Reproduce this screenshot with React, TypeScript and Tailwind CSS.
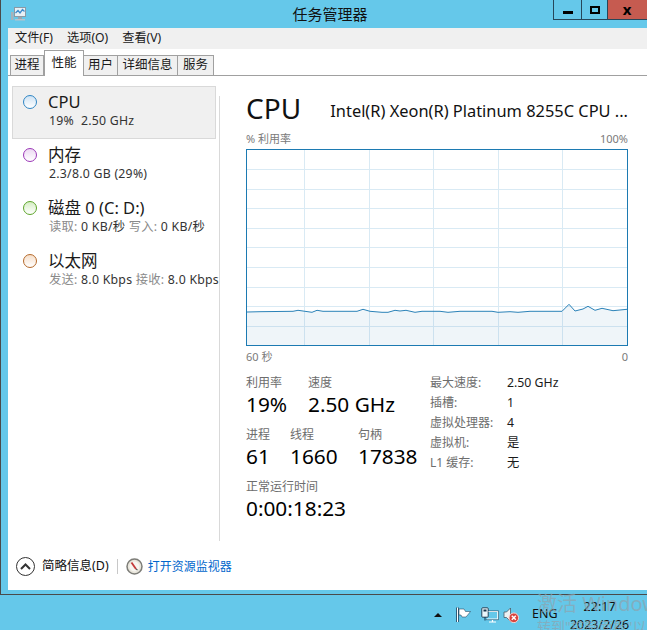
const FONT = '[font-family:"Noto_Sans","Noto_Sans_CJK_SC",sans-serif]'

const linePoints =
  '1,163 14,162.7 47,162.3 52,161.3 66,163.3 71,161.3 77,162.3 111,162.3 117,160.3 124,162.3 136,163.3 142,163.3 149,161.3 154,162 160,161.3 169,163.3 176,162.3 194,162.3 202,163.3 214,162.3 246,162.3 252,163.3 264,162.7 272,163.3 284,162.3 316,162.3 323,155.3 329,162 337,160 342,157.3 349,161.3 356,159.3 367,161.7 381,160.3'

function Ring({ border, from }: { border: string; from: string }) {
  return <span className={`mt-[3px] block h-[14px] w-[14px] shrink-0 rounded-full border-[1.5px] bg-gradient-to-b to-white ${border} ${from}`} />
}

function SideItem({ ring, title, sub, selected }: { ring: React.ReactNode; title: string; sub: React.ReactNode; selected?: boolean }) {
  return (
    <div className={`flex h-[53px] w-[204px] items-start gap-[11px] border pl-[10px] pt-[5px] ${selected ? 'border-[#d9d9d9] bg-[#f0f0f0]' : 'border-transparent'}`}>
      {ring}
      <div className="whitespace-nowrap">
        <div className="h-[20px] text-[16.5px] leading-[20px] text-[#1a1a1a]">{title}</div>
        <div className="ml-px text-[12.3px] leading-[17px] tracking-[0.25px] text-[#333]">{sub}</div>
      </div>
    </div>
  )
}

function Stat({ label, value, className }: { label: string; value: string; className: string }) {
  return (
    <div className={className}>
      <div className="h-[16px] text-[12px] leading-[16px] text-[#6d6d6d]">{label}</div>
      <div className="text-[20.8px] leading-[26px] text-black">{value}</div>
    </div>
  )
}

function Spec({ label, value }: { label: string; value: string }) {
  return (
    <div className="flex h-[20px] items-center text-[12px]">
      <span className="w-[77px] text-[#6d6d6d]">{label}</span>
      <span className="text-[12.3px] text-[#1a1a1a]">{value}</span>
    </div>
  )
}

function Graph() {
  return (
    <svg className="block" width="382" height="197" viewBox="0 0 382 197">
      <rect x="0.5" y="0.5" width="381" height="196" fill="#fff" />
      {[20, 40, 59, 79, 98, 118, 138, 157, 177].map((y) => (
        <line key={y} x1="1" x2="381" y1={y + 0.5} y2={y + 0.5} stroke="#d9eaf4" />
      ))}
      {[58.5, 123.5, 187.5, 252.5, 316.5].map((x) => (
        <line key={x} x1={x} x2={x} y1="1" y2="196" stroke="#d9eaf4" />
      ))}
      <polygon points={`1,196 ${linePoints} 381,196`} fill="#4f8fc0" fillOpacity="0.09" />
      <polyline points={linePoints} fill="none" stroke="#2b82b8" strokeWidth="1" />
      <rect x="0.5" y="0.5" width="381" height="196" fill="none" stroke="#1c7ab2" />
    </svg>
  )
}

function AppIcon() {
  return (
    <svg className="block" width="17" height="16" viewBox="0 0 17 16">
      <rect x="4.5" y="1.5" width="11" height="9" fill="#e8f0f5" stroke="#8a9aa6" />
      <path d="M5.5 7 L8 4.5 L10 7 L12.5 3.5 L14.5 5.5" fill="none" stroke="#3f8ccc" strokeWidth="1.3" />
      <rect x="1" y="6" width="2.5" height="8" fill="#a8b2ba" />
      <rect x="8" y="11" width="4" height="2" fill="#9aa6ae" />
      <rect x="5" y="13" width="10" height="1.5" fill="#b8c2ca" />
    </svg>
  )
}

function MonitorIcon() {
  return (
    <svg className="block" width="17" height="17" viewBox="0 0 17 17">
      <circle cx="8.5" cy="8.5" r="7.5" fill="#e9e6dc" stroke="#7d7d78" strokeWidth="1.5" />
      <circle cx="8.5" cy="8.5" r="5" fill="#f7f6f1" />
      <path d="M5.5 4.5 L10 11" stroke="#c43b3b" strokeWidth="1.8" />
      <path d="M10 11 L11.5 12" stroke="#555" strokeWidth="1.2" />
    </svg>
  )
}

function FlagIcon() {
  return (
    <svg className="block" width="15" height="16" viewBox="0 0 15 16">
      <path d="M1.5 0.5 V15" stroke="#17324a" strokeWidth="2.4" />
      <path d="M1.5 0.5 V15" stroke="#fff" strokeWidth="1" />
      <path d="M3 2 H8 L9.5 4.5 H14.5 L12.5 7 L10 10 H6 L5 8 H3 Z" fill="#fff" stroke="#17324a" strokeWidth="0.5" />
    </svg>
  )
}

function NetworkIcon() {
  return (
    <svg className="block" width="18" height="16" viewBox="0 0 18 16">
      <rect x="0.8" y="0.8" width="6.4" height="9.4" rx="0.8" fill="#eaf6fb" stroke="#17324a" strokeWidth="0.9" />
      <rect x="2.5" y="2.5" width="3" height="2" fill="#17324a" />
      <path d="M4 10 V13.5" stroke="#17324a" />
      <path d="M7.5 4.5 H16.8 V12 H6 " fill="none" stroke="#fff" strokeWidth="1.2" />
      <path d="M7 3.8 H17.5 V12.7 H5" fill="none" stroke="#17324a" strokeWidth="0.5" />
      <path d="M11.5 13 V14.5 M8 15 H15" stroke="#fff" strokeWidth="1.2" />
    </svg>
  )
}

function SoundIcon() {
  return (
    <svg className="block" width="16" height="16" viewBox="0 0 16 16">
      <path d="M1 5 H3.5 L7.5 1 V14.5 L3.5 10.5 H1 Z" fill="#eef1f3" stroke="#4a5a66" strokeWidth="0.8" />
      <circle cx="10.8" cy="10.8" r="4.8" fill="#d9423c" stroke="#f3d5d2" />
      <path d="M8.8 8.8 L12.8 12.8 M12.8 8.8 L8.8 12.8" stroke="#fff" strokeWidth="1.5" />
    </svg>
  )
}

export default function App() {
  return (
    <div className={`relative flex h-[630px] w-[647px] flex-col overflow-hidden bg-[#65c8ea] ${FONT}`}>
      {/* task manager window */}
      <div className="flex h-[595px] shrink-0 flex-col border-b border-l border-[#4a4a4a] pb-[4px] pl-[7px]">
        <div className="-ml-[7px] flex h-[28px] shrink-0">
          <div className="w-[106px] pl-[9px] pt-[6px]">
            <AppIcon />
          </div>
          <div className="flex-1 pt-[4px] text-center text-[15px] leading-[20px] text-[#111]">任务管理器</div>
          <div className="flex h-[20px] w-[94px] border-b border-l border-[#26475a]">
            <div className="flex w-[28px] items-center justify-center border-r border-[#26475a]">
              <span className="mt-[5px] h-[3px] w-[10px] bg-black" />
            </div>
            <div className="flex w-[26px] items-center justify-center border-r border-[#26475a]">
              <span className="h-[8px] w-[10px] border-2 border-black" />
            </div>
            <div className="flex flex-1 items-center justify-center bg-[#c65b50] pr-[1px] text-[15px] font-bold leading-none text-black">x</div>
          </div>
        </div>

        <div className="flex h-[21px] shrink-0 items-center gap-[14px] bg-[#f0f0f0] pl-[7px] text-[12.2px] text-[#1a1a1a]">
          <span>文件(F)</span>
          <span>选项(O)</span>
          <span>查看(V)</span>
        </div>

        <div className="flex h-[27px] shrink-0 items-end border-b border-[#a0a0a0] bg-white pl-[2px] text-[12.5px] text-[#1a1a1a]">
          <div className="flex h-[20px] w-[34px] items-center justify-center border border-b-0 border-[#a0a0a0] bg-[#f0f0f0]">进程</div>
          <div className="z-10 -mb-px flex h-[26px] w-[40px] items-center justify-center border border-b-0 border-[#a0a0a0] bg-white">性能</div>
          <div className="flex h-[20px] w-[34px] items-center justify-center border-r border-t border-[#a0a0a0] bg-[#f0f0f0]">用户</div>
          <div className="flex h-[20px] w-[60px] items-center justify-center border-r border-t border-[#a0a0a0] bg-[#f0f0f0]">详细信息</div>
          <div className="flex h-[20px] w-[36px] items-center justify-center border-r border-t border-[#a0a0a0] bg-[#f0f0f0]">服务</div>
        </div>

        <div className="flex min-h-0 flex-1 flex-col bg-white">
          <div className="flex h-[474px] shrink-0">
            {/* sidebar */}
            <div className="w-[211px] shrink-0 pl-[4px] pt-[10px]">
              <SideItem selected ring={<Ring border="border-[#2f86c4]" from="from-[#cfe3f4]" />} title="CPU" sub={'19%\u00a0 2.50 GHz'} />
              <SideItem ring={<Ring border="border-[#9b37b8]" from="from-[#ecd9f2]" />} title="内存" sub="2.3/8.0 GB (29%)" />
              <SideItem
                ring={<Ring border="border-[#5da52a]" from="from-[#d6edc4]" />}
                title="磁盘 0 (C: D:)"
                sub={<><span className="text-[#8a8a8a]">读取:</span> 0 KB/秒 <span className="text-[#8a8a8a]">写入:</span> 0 KB/秒</>}
              />
              <SideItem
                ring={<Ring border="border-[#b56a2c]" from="from-[#f6dfca]" />}
                title="以太网"
                sub={<><span className="text-[#8a8a8a]">发送:</span> 8.0 Kbps <span className="text-[#8a8a8a]">接收:</span> 8.0 Kbps</>}
              />
            </div>
            <div className="mb-[9px] mt-[20px] w-px shrink-0 bg-[#d9d9d9]" />

            {/* detail pane */}
            <div className="min-w-0 flex-1 pl-[26px]">
              <div className="flex h-[54px] w-[382px] items-end justify-between pb-px">
                <span className="text-[28px] leading-[42px] text-[#111]">CPU</span>
                <span className="whitespace-nowrap pb-[7px] text-[16.4px] leading-[22px] text-[#111]">Intel(R) Xeon(R) Platinum 8255C CPU ...</span>
              </div>
              <div className="flex h-[19px] w-[382px] items-center justify-between text-[11px] text-[#7a7a7a]">
                <span>% 利用率</span>
                <span>100%</span>
              </div>
              <Graph />
              <div className="flex h-[19px] w-[382px] items-end justify-between text-[11px] leading-[16px] text-[#7a7a7a]">
                <span>60 秒</span>
                <span>0</span>
              </div>

              <div className="mt-[10px] flex">
                <div className="w-[184px] shrink-0">
                  <div className="flex h-[52px]">
                    <Stat className="w-[62px]" label="利用率" value="19%" />
                    <Stat className="" label="速度" value="2.50 GHz" />
                  </div>
                  <div className="flex h-[52px]">
                    <Stat className="w-[44px]" label="进程" value="61" />
                    <Stat className="w-[68px]" label="线程" value="1660" />
                    <Stat className="" label="句柄" value="17838" />
                  </div>
                  <Stat className="" label="正常运行时间" value="0:00:18:23" />
                </div>
                <div className="-mt-[2px]">
                  <Spec label="最大速度:" value="2.50 GHz" />
                  <Spec label="插槽:" value="1" />
                  <Spec label="虚拟处理器:" value="4" />
                  <Spec label="虚拟机:" value="是" />
                  <Spec label="L1 缓存:" value="无" />
                </div>
              </div>
            </div>
          </div>

          {/* footer */}
          <div className="flex flex-1 items-center pb-[7px] pl-[8px]">
            <span className="flex h-[19px] w-[19px] items-center justify-center rounded-full border-[1.5px] border-[#333]">
              <svg width="11" height="7" viewBox="0 0 11 7">
                <path d="M1 6 L5.5 1.5 L10 6" fill="none" stroke="#333" strokeWidth="2" />
              </svg>
            </span>
            <span className="ml-[7px] text-[12.5px] text-[#111]">简略信息(D)</span>
            <span className="ml-[8px] h-[15px] w-px bg-[#c8c8c8]" />
            <span className="ml-[8px]"><MonitorIcon /></span>
            <span className="ml-[5px] text-[12px] text-[#0066cc]">打开资源监视器</span>
          </div>
        </div>
      </div>

      {/* taskbar */}
      <div className="flex flex-1 items-center pl-[434px] text-[#111]">
        <span className="mt-[1px] h-0 w-0 border-x-[4px] border-b-[4px] border-x-transparent border-b-[#111]" />
        <span className="ml-[14px]"><FlagIcon /></span>
        <span className="ml-[10px]"><NetworkIcon /></span>
        <span className="ml-[4px]"><SoundIcon /></span>
        <span className="ml-[13px] text-[12.5px]">ENG</span>
        <div className="ml-[11px] mt-[3px] w-[62px] whitespace-nowrap text-center text-[12.5px] leading-[18px]">
          <div>22:17</div>
          <div>2023/2/26</div>
        </div>
      </div>

      {/* activation watermark over the taskbar */}
      <div className="pointer-events-none absolute left-[537px] top-[590px] whitespace-nowrap text-[#8fa3ad]/70">
        <div className="text-[20px] leading-[28px]">激活 Windows</div>
        <div className="text-[14px] leading-[18px]">转到"控制面板"以激活 Windows。</div>
      </div>
    </div>
  )
}
